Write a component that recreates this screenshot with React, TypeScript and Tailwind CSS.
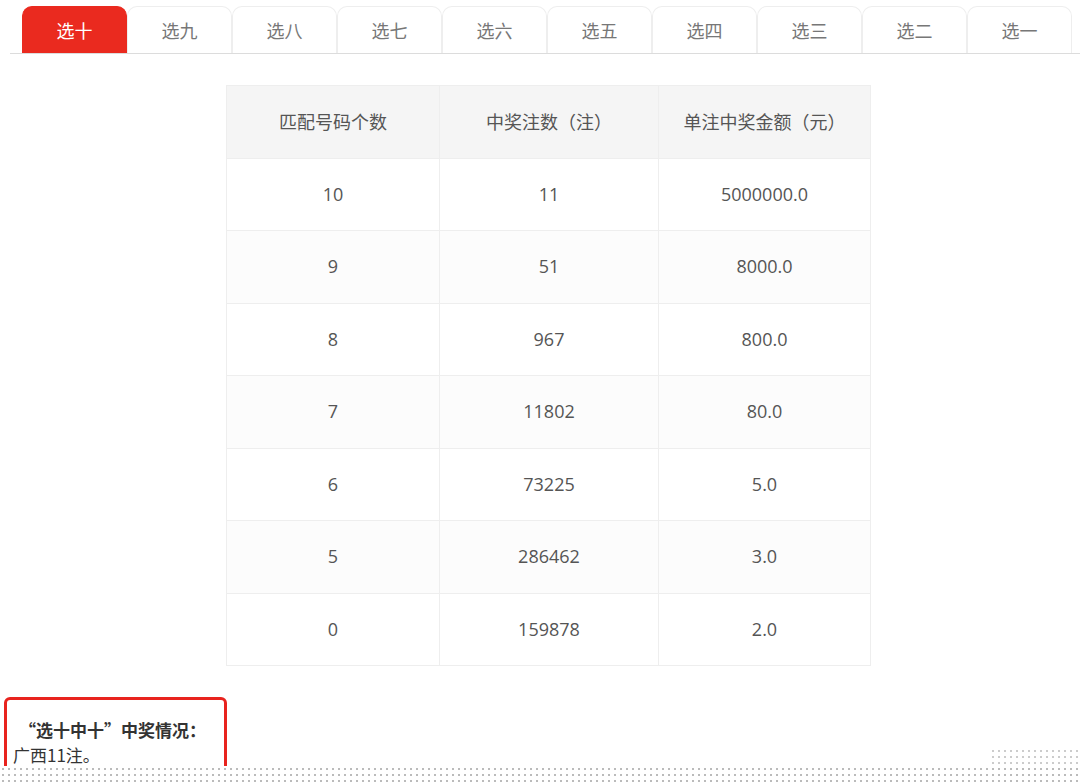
import React from 'react'

const tabs = ['选十', '选九', '选八', '选七', '选六', '选五', '选四', '选三', '选二', '选一']
const rows = [
  ['10', '11', '5000000.0'],
  ['9', '51', '8000.0'],
  ['8', '967', '800.0'],
  ['7', '11802', '80.0'],
  ['6', '73225', '5.0'],
  ['5', '286462', '3.0'],
  ['0', '159878', '2.0'],
]

export default function App() {
  return (
    <main className="relative w-[1080px] h-[782px] overflow-hidden bg-white" style={{ fontFamily: '"Microsoft YaHei", "Noto Sans CJK SC", sans-serif' }}>
      <div className="ml-[10px] mt-[6px] flex pl-[12px] border-b border-[#dcdcdc]">
        {tabs.map((t, i) => (
          <div
            key={t}
            className={
              'w-[105px] h-[47px] flex items-center justify-center text-[18px] rounded-t-[10px] border border-b-0 ' +
              (i === 0 ? 'bg-[#ea2a1f] border-[#ea2a1f] text-white' : 'bg-white border-[#eeeeee] text-[#777]')
            }
          >
            {t}
          </div>
        ))}
      </div>

      <table className="ml-[226px] mt-[31px] w-[645px] border-collapse text-[18px] text-[#555]">
        <thead>
          <tr className="bg-[#f5f5f5] h-[72.5px]">
            <th className="w-[213px] font-normal border border-[#eeeeee]">匹配号码个数</th>
            <th className="w-[219px] font-normal border border-[#eeeeee]">中奖注数（注）</th>
            <th className="font-normal border border-[#eeeeee]">单注中奖金额（元）</th>
          </tr>
        </thead>
        <tbody>
          {rows.map((r, i) => (
            <tr key={i} className={'h-[72.5px] ' + (i % 2 === 1 ? 'bg-[#fcfcfc]' : 'bg-white')}>
              {r.map((c, j) => (
                <td key={j} className="text-center border border-[#eeeeee]" style={{ fontFamily: '"Open Sans", "Noto Sans", sans-serif' }}>{c}</td>
              ))}
            </tr>
          ))}
        </tbody>
      </table>

      <div className="ml-[4px] mt-[31px] w-[223px] h-[100px] border-[3px] border-[#e8231e] rounded-[6px] pt-[17px] text-[17px] text-[#333]">
        <div className="pl-[12px] font-bold leading-[26px]">“选十中十”中奖情况：</div>
        <div className="pl-[6px] leading-[24px]">广西11注。</div>
      </div>

      <div className="absolute left-0 right-0 top-[766px] h-[16px] bg-white bg-[radial-gradient(#bbb_1px,transparent_1.2px)] bg-[length:6px_6px]" />
      <div className="absolute left-[990px] top-[748px] w-[90px] h-[20px] bg-[radial-gradient(#ccc_1px,transparent_1.2px)] bg-[length:6px_6px]" />
    </main>
  )
}
